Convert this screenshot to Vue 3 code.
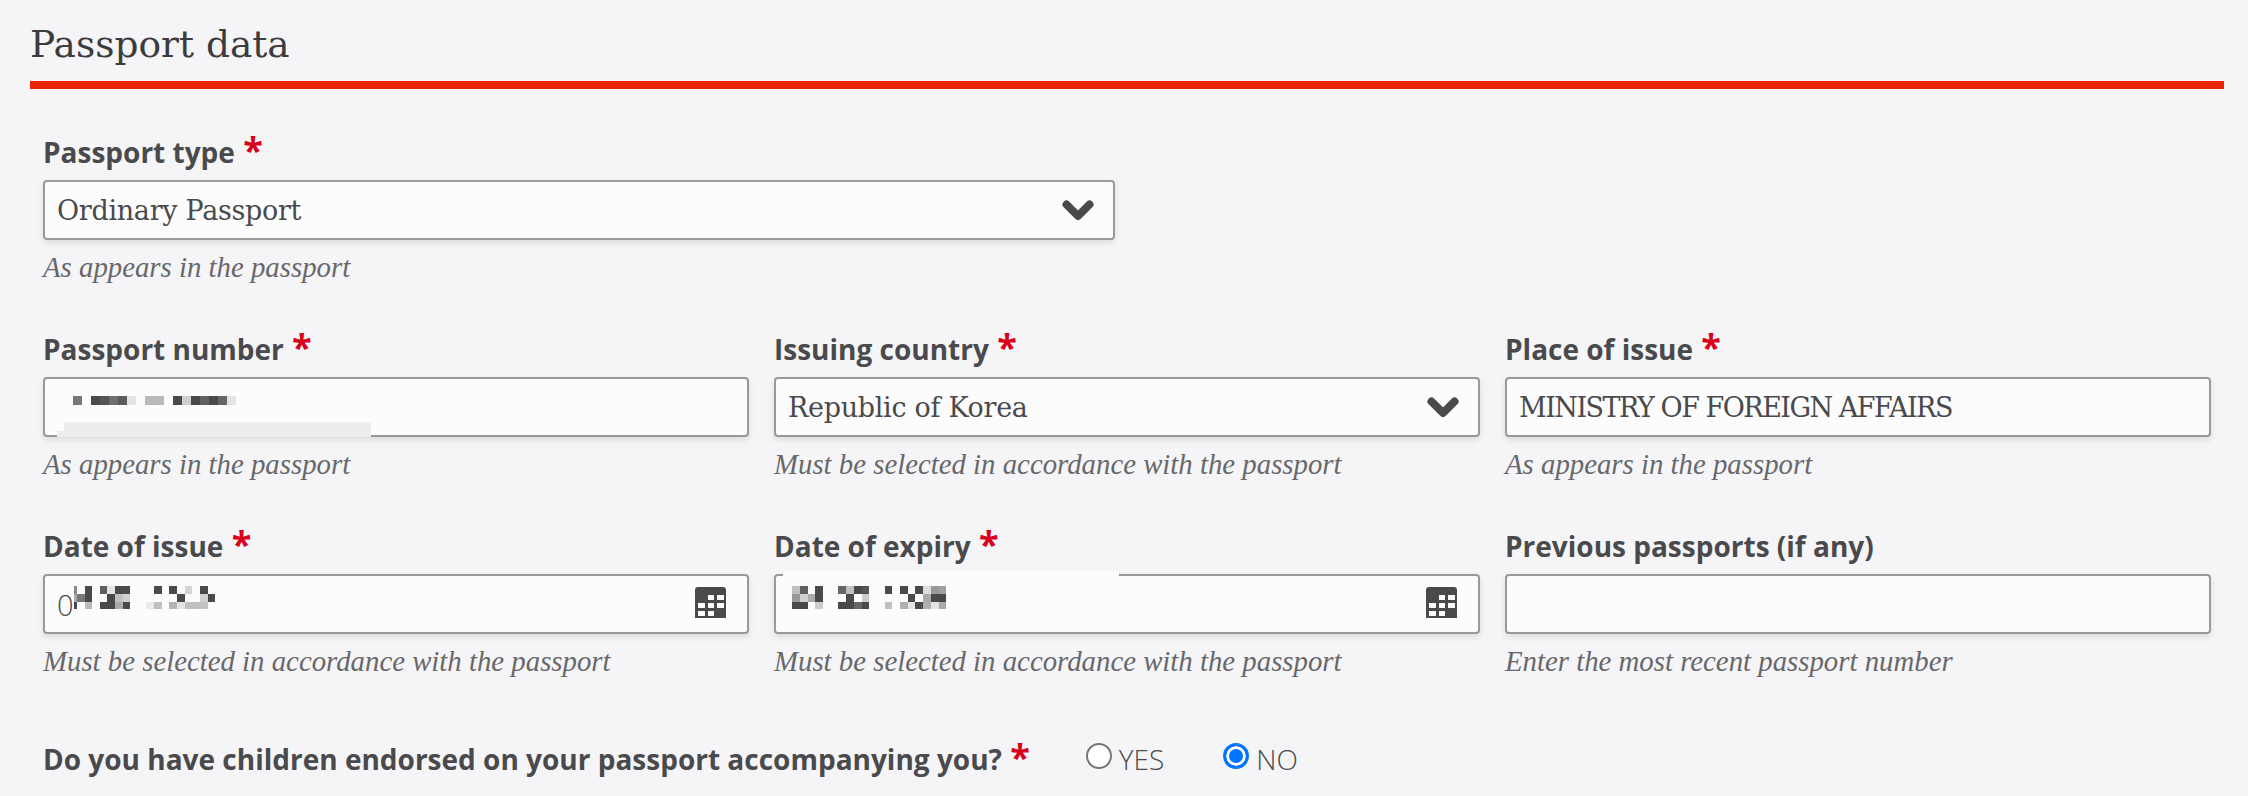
<template>
  <div class="page">
    <h2 class="section-title">Passport data</h2>

    <div class="form-row">
      <div class="field field-wide">
        <label class="field-label">Passport type <span class="req">*</span></label>
        <div class="control">
          <span class="value">Ordinary Passport</span>
          <svg class="chevron" viewBox="0 0 32 21"><path d="M4.5 4.5L16 16 27.5 4.5" /></svg>
        </div>
        <div class="hint">As appears in the passport</div>
      </div>
    </div>

    <div class="form-row three">
      <div class="field">
        <label class="field-label">Passport number <span class="req">*</span></label>
        <div class="control">
          <svg class="blur blur-number" width="163" height="9" shape-rendering="crispEdges">
            <rect v-for="(c, i) in numberCells" :key="i" :x="c[0]" y="0" :width="c[1]" height="9" :fill="c[2]" />
          </svg>
          <div class="patch patch-number"></div>
        </div>
        <div class="hint">As appears in the passport</div>
      </div>
      <div class="field">
        <label class="field-label">Issuing country <span class="req">*</span></label>
        <div class="control">
          <span class="value">Republic of Korea</span>
          <svg class="chevron" viewBox="0 0 32 21"><path d="M4.5 4.5L16 16 27.5 4.5" /></svg>
        </div>
        <div class="hint">Must be selected in accordance with the passport</div>
      </div>
      <div class="field">
        <label class="field-label">Place of issue <span class="req">*</span></label>
        <div class="control">
          <span class="value value-caps">MINISTRY OF FOREIGN AFFAIRS</span>
        </div>
        <div class="hint">As appears in the passport</div>
      </div>
    </div>

    <div class="form-row three">
      <div class="field">
        <label class="field-label">Date of issue <span class="req">*</span></label>
        <div class="control">
          <span class="value value-digit">0</span>
          <svg class="blur blur-date" width="141" height="23" shape-rendering="crispEdges">
            <rect v-for="(c, i) in issueCells" :key="i" :x="c.x" :y="c.y" :width="c.w" :height="c.h" :fill="c.fill" />
          </svg>
          <svg class="calendar" viewBox="0 0 31 31"><path :d="calendarPath" fill-rule="evenodd" /></svg>
        </div>
        <div class="hint">Must be selected in accordance with the passport</div>
      </div>
      <div class="field">
        <label class="field-label">Date of expiry <span class="req">*</span></label>
        <div class="control">
          <svg class="blur blur-date blur-expiry" width="154" height="23" shape-rendering="crispEdges">
            <rect v-for="(c, i) in expiryCells" :key="i" :x="c.x" :y="c.y" :width="c.w" :height="c.h" :fill="c.fill" />
          </svg>
          <svg class="calendar" viewBox="0 0 31 31"><path :d="calendarPath" fill-rule="evenodd" /></svg>
          <div class="patch patch-expiry"></div>
        </div>
        <div class="hint">Must be selected in accordance with the passport</div>
      </div>
      <div class="field">
        <label class="field-label">Previous passports (if any)</label>
        <div class="control"></div>
        <div class="hint">Enter the most recent passport number</div>
      </div>
    </div>

    <div class="radio-row">
      <label class="field-label">Do you have children endorsed on your passport accompanying you? <span class="req">*</span></label>
      <div class="radio-opt"><span class="radio"></span>YES</div>
      <div class="radio-opt"><span class="radio checked"></span>NO</div>
    </div>
  </div>
</template>

<script setup>
const dark = '#4a4a4c'
const pale = '#e4e4e5'

// redacted text, drawn as the mosaic blocks of the screenshot
const numberCells = [
  [0, 9, '#77777a'], [18, 9, dark], [27, 9, '#555557'], [36, 9, '#6e6e70'], [45, 9, '#5c5c5e'], [54, 9, pale],
  [72, 19, '#b9b9ba'], [100, 9, dark], [109, 9, '#d0d0d1'], [118, 9, dark], [127, 9, '#606062'],
  [136, 9, dark], [145, 9, '#666668'], [154, 9, pale],
]

// one entry per mosaic column: x, width, colour of each of the three rows
function mosaic(cols) {
  const rows = [[0, 8], [8, 8], [16, 7]]
  const cells = []
  cols.forEach(([x, w, colors]) => {
    colors.forEach((fill, r) => {
      if (fill) cells.push({ x, w, y: rows[r][0], h: rows[r][1], fill })
    })
  })
  return cells
}

const issueCells = mosaic([
  [0, 3, ['#888', '#aaa', dark]],
  [3, 8, [null, '#777', null]],
  [11, 7, [dark, dark, '#bbb']],
  [26, 7, ['#606062', null, dark]],
  [33, 8, [pale, dark, dark]],
  [41, 8, [dark, '#c0c0c1', '#aaa']],
  [49, 7, [dark, '#d0d0d1', dark]],
  [72, 8, [null, null, '#eaeaec']],
  [80, 8, [dark, null, '#c0c0c1']],
  [95, 8, [dark, null, '#b4b4b5']],
  [103, 8, [null, dark, pale]],
  [111, 7, ['#d4d4d5', null, '#c0c0c1']],
  [118, 8, [null, null, '#c0c0c1']],
  [126, 8, [dark, '#d0d0d1', '#c4c4c5']],
  [134, 7, [null, dark, null]],
])

const expiryCells = mosaic([
  [0, 8, ['#c0c0c1', '#999', dark]],
  [8, 8, ['#606062', '#d0d0d1', dark]],
  [16, 7, [null, '#aaa', null]],
  [23, 8, [dark, dark, '#ccc']],
  [46, 8, ['#666668', null, dark]],
  [54, 8, ['#c0c0c1', dark, dark]],
  [62, 8, [dark, null, '#666668']],
  [70, 7, ['#555557', '#ccc', dark]],
  [93, 7, [dark, null, '#c0c0c1']],
  [108, 8, [dark, null, '#b0b0b1']],
  [116, 7, [null, dark, pale]],
  [123, 8, [dark, null, dark]],
  [131, 8, ['#ddd', '#aaa', '#b0b0b1']],
  [139, 8, ['#999', dark, pale]],
  [147, 7, ['#a0a0a1', dark, '#aaa']],
])

const calendarPath =
  'M3 0h25a3 3 0 0 1 3 3v28H0V3a3 3 0 0 1 3-3z' +
  'M13 8h6v5h-6zM22 8h7v5h-7zM3 16h7v5H3zM13 16h6v5h-6zM22 16h7v5h-7zM3 24h7v5H3zM13 24h6v5h-6z'
</script>

<style>
html, body {
  background: #f5f5f7;
}
</style>

<style scoped>
.page {
  width: 2248px;
  height: 796px;
  box-sizing: border-box;
  padding: 12px 24px 0 30px;
  overflow: hidden;
  background: #f5f5f7;
}

.section-title {
  margin: 0;
  height: 69px;
  border-bottom: 8px solid #ea2400;
  font-family: "DejaVu Serif", serif;
  font-size: 37.5px;
  font-weight: 400;
  line-height: 64px;
  color: #3c3c3e;
  box-sizing: content-box;
}

.form-row {
  padding: 0 13px;
  margin-bottom: 50px;
}

.form-row:first-of-type {
  margin-top: 49px;
}

.form-row.three {
  display: grid;
  grid-template-columns: repeat(3, 706px);
  gap: 25px;
}

.field-wide {
  width: 1072px;
}

.field-label {
  display: block;
  height: 42px;
  font-family: "Open Sans", sans-serif;
  font-size: 28px;
  font-weight: 700;
  line-height: 28px;
  color: #4a4a4c;
}

.req {
  margin-left: 1px;
  color: #d9001b;
  font-size: 36px;
  font-weight: 700;
  line-height: 0;
}

.control {
  position: relative;
  display: flex;
  align-items: center;
  height: 60px;
  box-sizing: border-box;
  padding: 0 12px;
  border: 2px solid #999;
  border-radius: 4px;
  background: #fcfcfc;
  box-shadow: 0 3px 6px rgba(0, 0, 0, 0.1);
}

.value {
  font-family: "DejaVu Serif", serif;
  font-size: 27px;
  letter-spacing: -0.3px;
  color: #4a4a4c;
}

.value-caps {
  letter-spacing: -1.5px;
}

.value-digit {
  font-family: "Open Sans", sans-serif;
  font-size: 29px;
  font-weight: 300;
  letter-spacing: 0;
}

.chevron {
  position: absolute;
  right: 19px;
  top: 18px;
  width: 32px;
  height: 21px;
}

.chevron path {
  fill: none;
  stroke: #4a4a4c;
  stroke-width: 8;
  stroke-linecap: round;
  stroke-linejoin: round;
}

.calendar {
  position: absolute;
  right: 21px;
  top: 11px;
  width: 31px;
  height: 31px;
  fill: #4a4a4c;
}

.blur {
  flex: none;
}

.blur-number {
  margin-left: 16px;
  margin-bottom: 14px;
}

.blur-date {
  margin-bottom: 13px;
}

.blur-expiry {
  margin-left: 4px;
}

.patch {
  position: absolute;
  background: #ededee;
}

.patch-number {
  left: 19px;
  bottom: -2px;
  width: 307px;
  height: 15px;
}

.patch-number::before {
  content: "";
  position: absolute;
  left: -7px;
  bottom: 0;
  width: 7px;
  height: 6px;
  background: #ededee;
}

.patch-expiry {
  left: 7px;
  top: -5px;
  width: 336px;
  height: 6px;
  background: #fcfcfc;
}

.hint {
  margin-top: 9px;
  font-family: "Liberation Serif", serif;
  font-style: italic;
  font-size: 28.8px;
  line-height: 36px;
  color: #68686a;
}

.radio-row {
  display: flex;
  align-items: center;
  padding: 0 13px;
  margin-top: 62px;
}

.radio-row .field-label {
  height: 36px;
  line-height: 36px;
}

.radio-opt {
  display: flex;
  align-items: center;
  gap: 7px;
  margin-left: 59px;
  font-family: "Open Sans", sans-serif;
  font-size: 28px;
  font-weight: 300;
  line-height: 36px;
  color: #4a4a4c;
}

.radio-opt:nth-child(2) {
  margin-left: 56px;
}

.radio {
  width: 26px;
  height: 26px;
  margin-top: -6px;
  box-sizing: border-box;
  border: 2px solid #767676;
  border-radius: 50%;
  background: #fff;
}

.radio.checked {
  border: 3px solid #0075ff;
  box-shadow: inset 0 0 0 3px #fff;
  background: #0075ff;
}
</style>
